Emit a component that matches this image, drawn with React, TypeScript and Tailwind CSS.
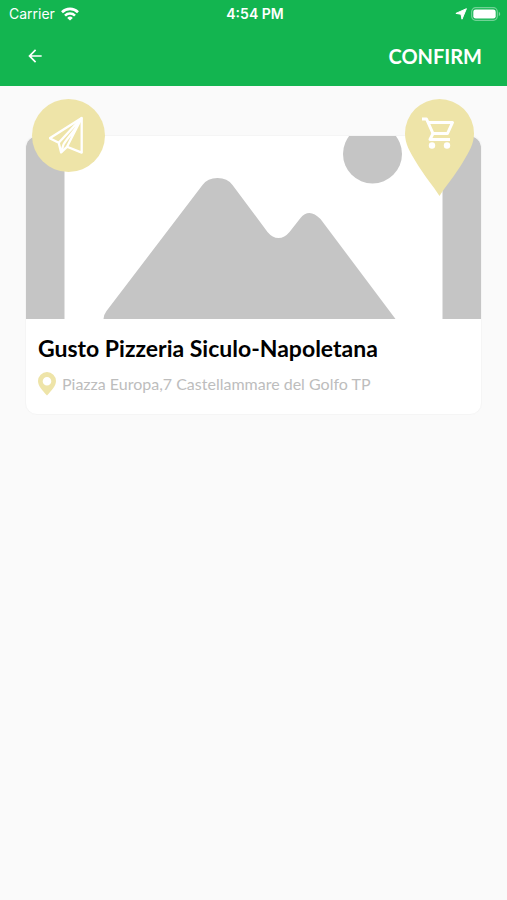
import { MdArrowBack } from "react-icons/md";

interface Place {
  name: string;
  address: string;
}

const place: Place = {
  name: "Gusto Pizzeria Siculo-Napoletana",
  address: "Piazza Europa,7 Castellammare del Golfo TP",
};

const WifiIcon = () => (
  <svg width="18" height="14" viewBox="0 0 18 14" fill="none" stroke="white" strokeWidth="2.6">
    <path d="M1 5.2a11.4 11.4 0 0 1 16 0" />
    <path d="M4 8.6a7.1 7.1 0 0 1 10 0" />
    <path d="M9 13.6 6.2 10.9a4 4 0 0 1 5.6 0z" fill="white" stroke="none" />
  </svg>
);

const LocationIcon = () => (
  <svg width="12" height="12" viewBox="0 0 12 12" fill="white">
    <path d="M11.4.7 7 11.2 6 6.2.9 5.4z" stroke="white" strokeWidth="1" strokeLinejoin="round" />
  </svg>
);

const BatteryIcon = () => (
  <svg width="30" height="14" viewBox="0 0 30 14">
    <rect x="0.7" y="0.7" width="25.6" height="12.6" rx="4" fill="none" stroke="white" strokeOpacity="0.4" strokeWidth="1.2" />
    <rect x="2.3" y="2.4" width="22.4" height="9.2" rx="2.4" fill="white" />
    <path d="M27.8 4.8c1.9.8 1.9 3.6 0 4.4z" fill="white" fillOpacity="0.45" />
  </svg>
);

const StatusBar = () => (
  <div className="grid h-7 grid-cols-3 items-center pr-1.5 pl-[9px] font-['Inter',sans-serif] text-sm">
    <div className="flex items-center gap-1.5">
      <span>Carrier</span>
      <WifiIcon />
    </div>
    <span className="text-center font-semibold">4:54 PM</span>
    <div className="flex items-center justify-end gap-1">
      <LocationIcon />
      <BatteryIcon />
    </div>
  </div>
);

const PlaceholderImage = () => (
  <svg
    className="block h-[183px] w-full rounded-t-xl bg-white"
    viewBox="0 0 456 183"
    preserveAspectRatio="xMidYMid slice"
    fill="#c5c5c5"
    role="img"
    aria-label="No photo"
  >
    <rect width="39" height="183" />
    <rect x="417" width="39" height="183" />
    <circle cx="347" cy="18" r="29.5" />
    <path d="M78 183Q78 179 81 175L177 49Q182 42 192 42T207 49L242 96Q247 102 253 102T264 96L275 82Q279 77 284 77T295 83L370 183Z" />
  </svg>
);

const SendBadge = () => (
  <button
    type="button"
    aria-label="Directions"
    className="absolute -top-[37px] left-1.5 flex size-[73px] items-center justify-center rounded-full bg-[#eee4a8]"
  >
    <svg width="40" height="40" viewBox="0.5 0 40 40" fill="none" stroke="white" strokeWidth="2.3" strokeLinejoin="round">
      <path d="M33.2 2 1.200 22.200 10.200 26.800 12.600 36.400 18.500 30.800 33.200 36.600Z" />
      <path d="M33.200 2 10.200 26.800M33.200 2C27 15 20 20 15 28.500L12.600 36.400M33.200 2 18.500 30.800" />
    </svg>
  </button>
);

const CartBadge = () => (
  <button type="button" aria-label="Order" className="absolute -top-[37px] right-[7px]">
    <svg width="69" height="97" viewBox="0 0 69 97" fill="none">
      <path
        d="M34.5 97C29 88 18 75 11 63 5 53 0 45 0 34.5A34.5 34.5 0 0 1 69 34.5C69 45 64 53 58 63 51 75 40 88 34.5 97Z"
        fill="#eee4a8"
      />
      <g stroke="white" strokeWidth="3" strokeLinejoin="round">
        <path d="M17 20h4.5l6.500 14.500" />
        <path d="M23 23.500H47.500L42.500 34.500H28L25 40.500H45" />
      </g>
      <g fill="white">
        <circle cx="27" cy="46.5" r="3.2" />
        <circle cx="42" cy="46.5" r="3.2" />
      </g>
    </svg>
  </button>
);

const PinIcon = () => (
  <svg width="18" height="24" viewBox="0 0 18 24" fill="#eee4a8">
    <path
      fillRule="evenodd"
      d="M9 0a9 9 0 0 1 9 9c0 5-4.5 9.5-9 14.5C4.5 18.5 0 14 0 9a9 9 0 0 1 9-9zm0 5a4.3 4.3 0 1 0 0 8.6A4.3 4.3 0 0 0 9 5z"
    />
  </svg>
);

const PlaceCard = ({ name, address }: Place) => (
  <article className="relative rounded-xl border border-[#f5f5f5] bg-white">
    <PlaceholderImage />
    <div className="px-3 pt-[15px] pb-[18px]">
      <h1 className="text-[23px] leading-7 font-bold text-black">{name}</h1>
      <div className="mt-2.5 flex items-center gap-1.5">
        <PinIcon />
        <p className="text-base leading-6 text-[#bdbdbd]">{address}</p>
      </div>
    </div>
    <SendBadge />
    <CartBadge />
  </article>
);

const App = () => {
  return (
    <div className="min-h-screen bg-[#fafafa] font-['Lato',sans-serif]">
      <header className="bg-[#13b550] text-white">
        <StatusBar />
        <div className="flex h-[58px] items-center justify-between px-[25px] pb-0.5">
          <button type="button" aria-label="Back">
            <MdArrowBack className="size-5" />
          </button>
          <button type="button" className="text-xl leading-7 font-bold">
            CONFIRM
          </button>
        </div>
      </header>
      <main className="px-[25px] pt-[49px]">
        <PlaceCard {...place} />
      </main>
    </div>
  );
};

export default App;
